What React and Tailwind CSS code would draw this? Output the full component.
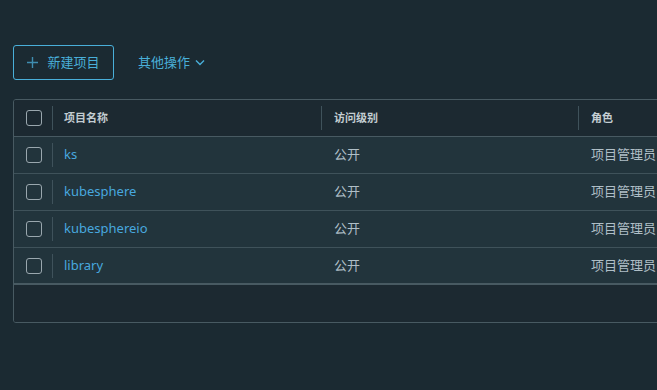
import React from "react";

const projects = [
  { name: "ks", access: "公开", role: "项目管理员" },
  { name: "kubesphere", access: "公开", role: "项目管理员" },
  { name: "kubesphereio", access: "公开", role: "项目管理员" },
  { name: "library", access: "公开", role: "项目管理员" },
];

function Checkbox() {
  return <span className="block w-4 h-4 rounded-[3px] border border-[#9aa7ae]" />;
}

function Divider() {
  return <span className="block w-px h-6 bg-[#3f525b]" />;
}

export default function App() {
  return (
    <div
      className="w-[657px] h-[390px] overflow-hidden bg-[#1b2a32] pl-[13px] pt-[45px]"
      style={{ fontFamily: '"Noto Sans", "Noto Sans CJK SC", sans-serif' }}
    >
      <div className="flex items-center gap-6">
        <button className="flex items-center gap-[9px] h-[35px] w-[101px] justify-center rounded-[3px] border border-[#49afd9] text-[#49afd9] text-[13px]">
          <svg width="11" height="11" viewBox="0 0 11 11" fill="none" stroke="#3f8db0" strokeWidth="1.4">
            <path d="M5.5 0v11M0 5.5h11" />
          </svg>
          新建项目
        </button>
        <button className="flex items-center gap-[5px] text-[#49afd9] text-[13px]">
          其他操作
          <svg width="10" height="7" viewBox="0 0 10 7" fill="none" stroke="currentColor" strokeWidth="1.4">
            <path d="M1 1.5l4 4 4-4" />
          </svg>
        </button>
      </div>

      <div className="mt-[19px] w-[660px] rounded-[3px] border border-[#485a62] overflow-hidden">
        <div className="flex items-center h-[37px] bg-[#1c2931] text-[11px] font-bold text-[#c3cdd2] border-b border-[#485a62]">
          <div className="w-[38px] pl-3"><Checkbox /></div>
          <Divider />
          <div className="w-[268px] pl-[11px]">项目名称</div>
          <Divider />
          <div className="w-[256px] pl-3">访问级别</div>
          <Divider />
          <div className="pl-3">角色</div>
        </div>
        {projects.map((p, i) => (
          <div
            key={p.name}
            className={
              "flex items-center h-[37px] bg-[#22343c] text-[13px] " +
              (i === projects.length - 1 ? "border-b-2 border-[#485a62]" : "border-b border-[#3f525a]")
            }
          >
            <div className="w-[38px] pl-3"><Checkbox /></div>
            <Divider />
            <div className="w-[269px] pl-[11px] text-[#48a8df]">{p.name}</div>
            <div className="w-[257px] pl-3 text-[#b0bfc7]">{p.access}</div>
            <div className="pl-3 text-[#b0bfc7]">{p.role}</div>
          </div>
        ))}
        <div className="h-[37px] bg-[#1c2931]" />
      </div>
    </div>
  );
}
